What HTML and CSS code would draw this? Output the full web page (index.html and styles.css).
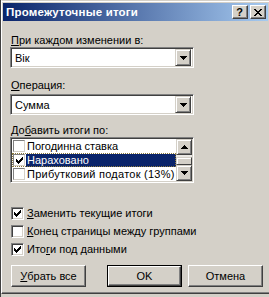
FILE: index.html
```html
<!DOCTYPE html>
<html lang="ru">
<head>
<meta charset="utf-8">
<title>Промежуточные итоги</title>
<link rel="stylesheet" href="styles.css">
</head>
<body>
<div class="screen">
  <div class="win">
    <div class="titlebar">
      <span class="title">Промежуточные итоги</span>
      <div class="tbtns">
        <span class="tbtn help">?</span>
        <span class="tbtn close"><svg width="8" height="7" viewBox="0 0 8 7" shape-rendering="crispEdges"><path d="M0 0h2v1h-2zM6 0h2v1h-2zM1 1h2v1h-2zM5 1h2v1h-2zM2 2h4v1h-4zM3 3h2v1h-2zM2 4h4v1h-4zM1 5h2v1h-2zM5 5h2v1h-2zM0 6h2v1h-2zM6 6h2v1h-2z" fill="#000"/></svg></span>
      </div>
    </div>
    <div class="content">
      <div class="lbl l1"><u>П</u>ри каждом изменении в:</div>
      <div class="combo c1">
        <span class="val">Вік</span>
        <span class="dd"><svg width="7" height="4" viewBox="0 0 7 4" shape-rendering="crispEdges"><path d="M0 0h7v1h-7zM1 1h5v1h-5zM2 2h3v1h-3zM3 3h1v1h-1z" fill="#000"/></svg></span>
      </div>
      <div class="lbl l2"><u>О</u>перация:</div>
      <div class="combo c2">
        <span class="val">Сумма</span>
        <span class="dd"><svg width="7" height="4" viewBox="0 0 7 4" shape-rendering="crispEdges"><path d="M0 0h7v1h-7zM1 1h5v1h-5zM2 2h3v1h-3zM3 3h1v1h-1z" fill="#000"/></svg></span>
      </div>
      <div class="lbl l3">До<u>б</u>авить итоги по:</div>
      <div class="listbox">
        <div class="items">
          <div class="item"><span class="lcb"></span><span class="itxt">Погодинна ставка</span></div>
          <div class="item sel"><span class="lcb"><svg width="7" height="7" viewBox="0 0 7 7" shape-rendering="crispEdges"><path d="M6 0h1v3h-1zM5 1h1v3h-1zM4 2h1v3h-1zM3 3h1v3h-1zM2 4h1v3h-1zM1 3h1v3h-1zM0 2h1v3h-1z" fill="#000"/></svg></span><span class="itxt">Нараховано</span></div>
          <div class="item"><span class="lcb"></span><span class="itxt wide">Прибутковий податок (13%)</span></div>
        </div>
        <div class="sbar">
          <span class="sbtn"><svg width="7" height="4" viewBox="0 0 7 4" shape-rendering="crispEdges"><path d="M3 0h1v1h-1zM2 1h3v1h-3zM1 2h5v1h-5zM0 3h7v1h-7z" fill="#000"/></svg></span>
          <span class="track"><span class="thumb"></span></span>
          <span class="sbtn"><svg width="7" height="4" viewBox="0 0 7 4" shape-rendering="crispEdges"><path d="M0 0h7v1h-7zM1 1h5v1h-5zM2 2h3v1h-3zM3 3h1v1h-1z" fill="#000"/></svg></span>
        </div>
      </div>
      <div class="checks">
        <div class="crow"><span class="cb"><svg width="7" height="7" viewBox="0 0 7 7" shape-rendering="crispEdges"><path d="M6 0h1v3h-1zM5 1h1v3h-1zM4 2h1v3h-1zM3 3h1v3h-1zM2 4h1v3h-1zM1 3h1v3h-1zM0 2h1v3h-1z" fill="#000"/></svg></span><span class="ctxt"><u>З</u>аменить текущие итоги</span></div>
        <div class="crow"><span class="cb"></span><span class="ctxt"><u>К</u>онец страницы между группами</span></div>
        <div class="crow"><span class="cb"><svg width="7" height="7" viewBox="0 0 7 7" shape-rendering="crispEdges"><path d="M6 0h1v3h-1zM5 1h1v3h-1zM4 2h1v3h-1zM3 3h1v3h-1zM2 4h1v3h-1zM1 3h1v3h-1zM0 2h1v3h-1z" fill="#000"/></svg></span><span class="ctxt">Ито<u>г</u>и под данными</span></div>
      </div>
      <div class="buttons">
        <span class="btn b1"><u>У</u>брать все</span>
        <span class="btn def"><span class="inner">OK</span></span>
        <span class="btn b3">Отмена</span>
      </div>
    </div>
  </div>
</div>
</body>
</html>
```
FILE: styles.css
```css
html, body {
  margin: 0;
  padding: 0;
  background: #D4D0C8;
  overflow: hidden;
}
.screen {
  width: 269px;
  height: 297px;
  overflow: hidden;
  border-left: 1px solid #404040;
  box-sizing: border-box;
  font-family: "Liberation Sans", Arial, sans-serif;
  font-size: 11px;
  color: #000;
}
.win {
  width: 270px;
  height: 294px;
  box-sizing: border-box;
  border-top: 1px solid #D4D0C8;
  border-left: 1px solid #FFFFFF;
  border-bottom: 1px solid #404040;
  padding: 2px 0 0 1px;
  box-shadow: inset 0 1px 0 #FFFFFF, inset 0 -1px 0 #808080;
  display: flex;
  flex-direction: column;
}
.titlebar {
  height: 18px;
  width: 265px;
  flex: none;
  background: linear-gradient(to right, #0A246A, #A6CAF0);
  display: flex;
  align-items: center;
  justify-content: space-between;
}
.title {
  color: #fff;
  font-weight: bold;
  font-size: 11.5px;
  letter-spacing: 0.2px;
  padding-left: 3px;
  line-height: 18px;
}
.tbtns {
  display: flex;
  gap: 2px;
  margin-right: 2px;
}
.tbtn {
  width: 16px;
  height: 14px;
  box-sizing: border-box;
  background: #D4D0C8;
  border: 1px solid;
  border-color: #FFFFFF #404040 #404040 #FFFFFF;
  box-shadow: inset -1px -1px 0 #808080;
  display: flex;
  align-items: center;
  justify-content: center;
}
.help {
  font-weight: bold;
  font-size: 11px;
  line-height: 11px;
  padding-right: 1px;
}
.close svg { display: block; }
.content {
  padding-left: 7px;
  display: flex;
  flex-direction: column;
  align-items: flex-start;
}
.lbl {
  line-height: 13px;
  height: 13px;
  padding-left: 1px;
}
.l1 { margin-top: 13px; }
.l2 { margin-top: 11px; }
.l3 { margin-top: 9px; }
.combo {
  width: 184px;
  height: 21px;
  box-sizing: border-box;
  background: #fff;
  border: 1px solid;
  border-color: #808080 #FFFFFF #FFFFFF #808080;
  box-shadow: inset 1px 1px 0 #404040, inset -1px -1px 0 #D4D0C8;
  padding: 2px;
  display: flex;
  align-items: center;
  justify-content: space-between;
}
.c2 { margin-top: 2px; }
.val { padding-left: 2px; }
.dd, .sbtn {
  width: 16px;
  height: 17px;
  box-sizing: border-box;
  background: #D4D0C8;
  border: 1px solid;
  border-color: #D4D0C8 #404040 #404040 #D4D0C8;
  box-shadow: inset 1px 1px 0 #FFFFFF, inset -1px -1px 0 #808080;
  display: flex;
  align-items: center;
  justify-content: center;
  flex: none;
}
.dd svg, .sbtn svg { display: block; }
.listbox {
  width: 184px;
  height: 46px;
  box-sizing: border-box;
  background: #fff;
  border: 1px solid;
  border-color: #808080 #FFFFFF #FFFFFF #808080;
  box-shadow: inset 1px 1px 0 #404040, inset -1px -1px 0 #D4D0C8;
  padding: 1px;
  display: flex;
  overflow: hidden;
}
.items {
  flex: 1;
  min-width: 0;
  overflow: hidden;
  display: flex;
  flex-direction: column;
}
.item {
  height: 14px;
  display: flex;
  align-items: center;
  white-space: nowrap;
  box-sizing: border-box;
  padding-left: 1px;
}
.item.sel {
  outline: 1px dotted #8C7A3C;
  outline-offset: -1px;
}
.lcb {
  width: 12px;
  height: 12px;
  box-sizing: border-box;
  flex: none;
  background: #fff;
  border: 1px solid;
  border-color: #808080 #D4D0C8 #D4D0C8 #808080;
  display: flex;
  align-items: center;
  justify-content: center;
}
.itxt {
  margin-left: 1px;
  padding: 0 1px;
  line-height: 13px;
}
.itxt.wide { letter-spacing: 0.25px; }
.sel .itxt {
  background: #0A246A;
  color: #fff;
  flex: 1;
}
.sbar {
  width: 16px;
  flex: none;
  display: flex;
  flex-direction: column;
}
.sbar .sbtn { height: 16px; }
.track {
  flex: 1;
  background: #EAE8E4;
  padding-top: 2px;
  display: flex;
  flex-direction: column;
}
.thumb {
  height: 8px;
  box-sizing: border-box;
  background: #D4D0C8;
  border: 1px solid;
  border-color: #D4D0C8 #404040 #404040 #D4D0C8;
  box-shadow: inset 1px 1px 0 #FFFFFF;
}
.checks {
  margin-top: 21px;
  display: flex;
  flex-direction: column;
}
.crow {
  height: 18px;
  display: flex;
  align-items: center;
  padding-left: 1px;
}
.cb {
  width: 13px;
  height: 13px;
  box-sizing: border-box;
  background: #fff;
  border: 1px solid;
  border-color: #808080 #FFFFFF #FFFFFF #808080;
  box-shadow: inset 1px 1px 0 #404040, inset -1px -1px 0 #D4D0C8;
  display: flex;
  align-items: center;
  justify-content: center;
  flex: none;
}
.ctxt { margin-left: 3px; }
.buttons {
  margin-top: 7px;
  margin-left: 1px;
  display: flex;
}
.btn {
  width: 75px;
  height: 22px;
  box-sizing: border-box;
  background: #D4D0C8;
  border: 1px solid;
  border-color: #FFFFFF #404040 #404040 #FFFFFF;
  box-shadow: inset -1px -1px 0 #808080;
  display: flex;
  align-items: center;
  justify-content: center;
}
.btn.def {
  margin-left: 21px;
  border: 1px solid #000;
  box-shadow: none;
  padding: 0;
}
.btn.def .inner {
  width: 100%;
  height: 100%;
  box-sizing: border-box;
  border: 1px solid;
  border-color: #FFFFFF #404040 #404040 #FFFFFF;
  box-shadow: inset -1px -1px 0 #808080;
  display: flex;
  align-items: center;
  justify-content: center;
}
.b3 { margin-left: 6px; }
```
